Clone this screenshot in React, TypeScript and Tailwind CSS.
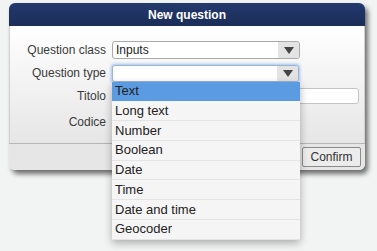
import { useState } from 'react'

const types = ['Text', 'Long text', 'Number', 'Boolean', 'Date', 'Time', 'Date and time', 'Geocoder']

function Arrow() {
  return (
    <span className="flex h-full w-[21px] items-center justify-center rounded-r-[3px] bg-[#e3e3e3]">
      <svg width="10" height="7" viewBox="0 0 10 7">
        <path d="M0 0 H10 L5 7 Z" fill="#444" />
      </svg>
    </span>
  )
}

export default function App() {
  const [selected] = useState(0)

  return (
    <div className="h-[251px] w-[377px] bg-[#f2f3f3] pt-[3px] pl-[9px] font-['Liberation_Sans',Arial,sans-serif] text-[12px]">
      <div className="flex h-[167px] w-[356px] flex-col rounded-[6px] shadow-[3px_4px_5px_rgba(0,0,0,0.55)]">
        {/* Title */}
        <div className="flex h-[23px] items-center justify-center rounded-t-[6px] bg-gradient-to-b from-[#233a6e] to-[#1b2d58] font-bold text-white">
          New question
        </div>

        {/* Body */}
        <div className="flex flex-1 flex-col gap-[5px] border-x border-[#d0d0d0] bg-gradient-to-b from-white to-[#e6e6e6] pt-[15px] text-[#3a3a3a]">
          <div className="flex items-center">
            <span className="w-[96px] text-right">Question class</span>
            <div className="ml-[6px] flex h-[18px] w-[188px] items-center justify-between rounded-[3px] border border-[#a9a9a9] bg-white">
              <span className="pl-[3px] text-[#222]">Inputs</span>
              <Arrow />
            </div>
          </div>

          <div className="flex items-center">
            <span className="w-[96px] text-right">Question type</span>
            <div className="relative ml-[6px]">
              <div className="flex h-[17px] w-[187px] items-center justify-end rounded-[3px] border border-[#9db4d0] bg-white shadow-[0_0_3px_1px_rgba(100,160,230,0.6)]">
                <Arrow />
              </div>
              {/* Dropdown list */}
              <div className="absolute top-[17px] left-0 z-10 w-[188px] bg-[#f5f5f5] text-[13px] text-[#222] shadow-[0_3px_8px_rgba(0,0,0,0.3)]">
                {types.map((t, i) => (
                  <div
                    key={t}
                    className={`flex h-[19.75px] items-center border-b pl-[3px] ${
                      i === selected ? 'border-[#5b9be1] bg-[#5b9be1]' : 'border-[#e4e4e4]'
                    }`}
                  >
                    {t}
                  </div>
                ))}
              </div>
            </div>
          </div>

          <div className="flex items-center">
            <span className="w-[96px] text-right">Titolo</span>
            <div className="ml-[6px] h-[16px] w-[247px] rounded-[3px] border border-[#c4c4c4] bg-white" />
          </div>

          <div className="mt-[3px] flex items-center">
            <span className="w-[96px] text-right">Codice</span>
            <div className="ml-[6px] h-[16px] w-[247px]" />
          </div>
        </div>

        {/* Footer */}
        <div className="flex h-[27px] items-center justify-end rounded-b-[6px] border-t border-[#b5b5b5] bg-[#e6e6e6] pr-[4px]">
          <button className="h-[20px] w-[59px] rounded-[2px] border border-[#8a8a8a] bg-[#ececec] text-[12px] text-[#333]">
            Confirm
          </button>
        </div>
      </div>
    </div>
  )
}
